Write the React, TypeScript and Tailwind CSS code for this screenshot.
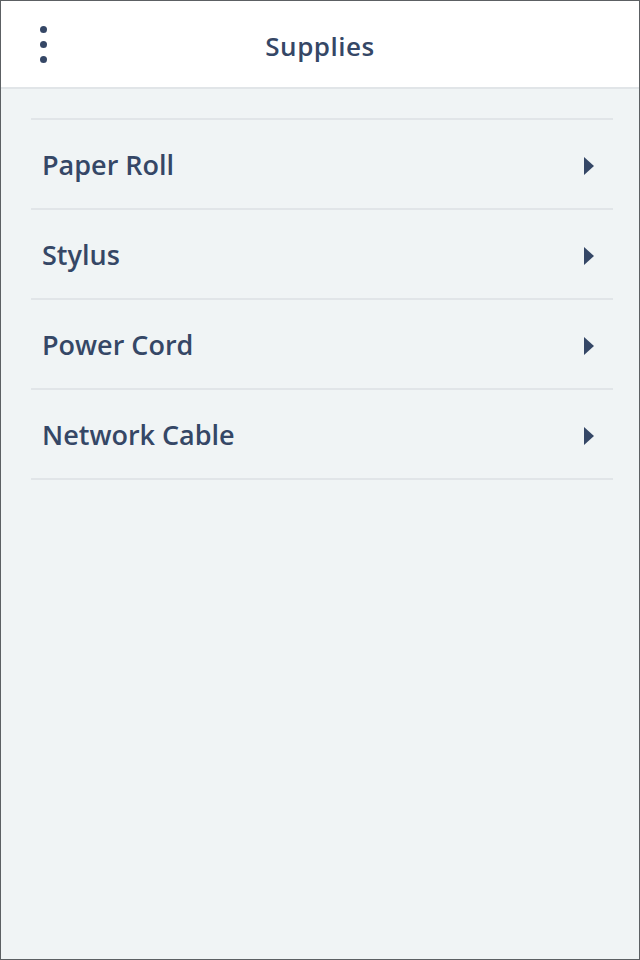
import React from "react";

const items = ["Paper Roll", "Stylus", "Power Cord", "Network Cable"];

const App = () => {
  return (
    <div
      className="w-[640px] h-[960px] flex flex-col bg-[#f0f4f5] border border-[#5c6063] text-[#354766]"
      style={{ fontFamily: "'Open Sans', sans-serif" }}
    >
      {/* Header */}
      <div className="h-[88px] shrink-0 bg-white border-b-2 border-[#e1e5e8] flex items-center relative">
        <button className="w-[84px] h-full flex flex-col items-center justify-center gap-[8px]">
          <span className="block w-[7px] h-[7px] rounded-full bg-[#354766]" />
          <span className="block w-[7px] h-[7px] rounded-full bg-[#354766]" />
          <span className="block w-[7px] h-[7px] rounded-full bg-[#354766]" />
        </button>
        <h1 className="absolute left-0 right-0 top-[27px] text-center text-[26px] leading-[36px] font-semibold tracking-[0.5px] pointer-events-none">
          Supplies
        </h1>
      </div>

      {/* List */}
      <div className="pt-[29px] pl-[30px] pr-[26px]">
        <ul className="border-t-2 border-[#e1e5e8]">
          {items.map((item) => (
            <li
              key={item}
              className="h-[90px] flex items-center justify-between pl-[11px] pr-[19px] pt-[3px] border-b-2 border-[#e1e5e8]"
            >
              <span className="text-[27px] font-semibold">{item}</span>
              <svg width="10" height="18" viewBox="0 0 10 18">
                <path d="M0 0 L10 9 L0 18 Z" fill="#354766" />
              </svg>
            </li>
          ))}
        </ul>
      </div>
    </div>
  );
};

export default App;
